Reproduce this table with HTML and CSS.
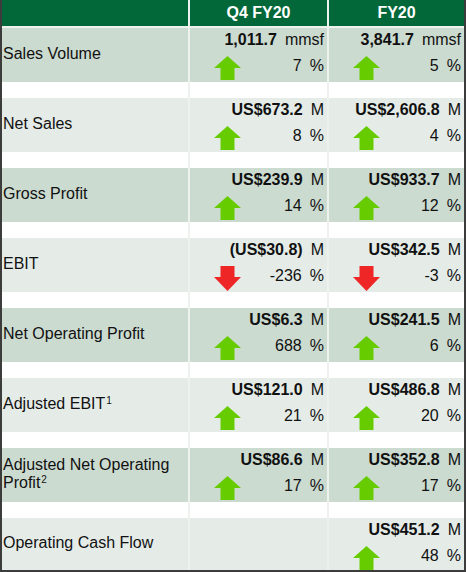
FILE: index.html
```html
<!DOCTYPE html>
<html>
<head>
<meta charset="utf-8">
<link rel="stylesheet" href="styles.css">
</head>
<body>
<svg class="defs" width="0" height="0" aria-hidden="true">
  <symbol id="up" viewBox="0 0 27 24"><polygon points="13.5,0 27,12 20.5,12 20.5,24 6.5,24 6.5,12 0,12" fill="#66cc00"/></symbol>
  <symbol id="down" viewBox="0 0 27 25"><polygon points="6.5,0 20.5,0 20.5,11 27,11 13.5,25 0,11 6.5,11" fill="#ee2626"/></symbol>
</svg>
<div class="table">
  <div class="row head">
    <div></div>
    <div class="hcell">Q4 FY20</div>
    <div class="hcell">FY20</div>
  </div>

  <div class="row dark">
    <div class="label"><span>Sales Volume</span></div>
    <div class="val"><div class="l1"><b>1,011.7</b><span class="u">mmsf</span></div><div class="l2"><svg class="arrow"><use href="#up"/></svg><span>7<span class="u">%</span></span></div></div>
    <div class="val"><div class="l1"><b>3,841.7</b><span class="u">mmsf</span></div><div class="l2"><svg class="arrow"><use href="#up"/></svg><span>5<span class="u">%</span></span></div></div>
  </div>
  <div class="row spacer"><div></div><div></div><div></div></div>

  <div class="row light">
    <div class="label"><span>Net Sales</span></div>
    <div class="val"><div class="l1"><b>US$673.2</b><span class="u">M</span></div><div class="l2"><svg class="arrow"><use href="#up"/></svg><span>8<span class="u">%</span></span></div></div>
    <div class="val"><div class="l1"><b>US$2,606.8</b><span class="u">M</span></div><div class="l2"><svg class="arrow"><use href="#up"/></svg><span>4<span class="u">%</span></span></div></div>
  </div>
  <div class="row spacer"><div></div><div></div><div></div></div>

  <div class="row dark">
    <div class="label"><span>Gross Profit</span></div>
    <div class="val"><div class="l1"><b>US$239.9</b><span class="u">M</span></div><div class="l2"><svg class="arrow"><use href="#up"/></svg><span>14<span class="u">%</span></span></div></div>
    <div class="val"><div class="l1"><b>US$933.7</b><span class="u">M</span></div><div class="l2"><svg class="arrow"><use href="#up"/></svg><span>12<span class="u">%</span></span></div></div>
  </div>
  <div class="row spacer"><div></div><div></div><div></div></div>

  <div class="row light">
    <div class="label"><span>EBIT</span></div>
    <div class="val"><div class="l1"><b>(US$30.8)</b><span class="u">M</span></div><div class="l2"><svg class="arrow dn"><use href="#down"/></svg><span>-236<span class="u">%</span></span></div></div>
    <div class="val"><div class="l1"><b>US$342.5</b><span class="u">M</span></div><div class="l2"><svg class="arrow dn"><use href="#down"/></svg><span>-3<span class="u">%</span></span></div></div>
  </div>
  <div class="row spacer"><div></div><div></div><div></div></div>

  <div class="row dark">
    <div class="label"><span>Net Operating Profit</span></div>
    <div class="val"><div class="l1"><b>US$6.3</b><span class="u">M</span></div><div class="l2"><svg class="arrow"><use href="#up"/></svg><span>688<span class="u">%</span></span></div></div>
    <div class="val"><div class="l1"><b>US$241.5</b><span class="u">M</span></div><div class="l2"><svg class="arrow"><use href="#up"/></svg><span>6<span class="u">%</span></span></div></div>
  </div>
  <div class="row spacer"><div></div><div></div><div></div></div>

  <div class="row light">
    <div class="label"><span>Adjusted EBIT<sup>1</sup></span></div>
    <div class="val"><div class="l1"><b>US$121.0</b><span class="u">M</span></div><div class="l2"><svg class="arrow"><use href="#up"/></svg><span>21<span class="u">%</span></span></div></div>
    <div class="val"><div class="l1"><b>US$486.8</b><span class="u">M</span></div><div class="l2"><svg class="arrow"><use href="#up"/></svg><span>20<span class="u">%</span></span></div></div>
  </div>
  <div class="row spacer"><div></div><div></div><div></div></div>

  <div class="row dark">
    <div class="label"><span>Adjusted Net Operating Profit<sup>2</sup></span></div>
    <div class="val"><div class="l1"><b>US$86.6</b><span class="u">M</span></div><div class="l2"><svg class="arrow"><use href="#up"/></svg><span>17<span class="u">%</span></span></div></div>
    <div class="val"><div class="l1"><b>US$352.8</b><span class="u">M</span></div><div class="l2"><svg class="arrow"><use href="#up"/></svg><span>17<span class="u">%</span></span></div></div>
  </div>
  <div class="row spacer"><div></div><div></div><div></div></div>

  <div class="row light last">
    <div class="label"><span>Operating Cash Flow</span></div>
    <div class="val"></div>
    <div class="val"><div class="l1"><b>US$451.2</b><span class="u">M</span></div><div class="l2"><svg class="arrow"><use href="#up"/></svg><span>48<span class="u">%</span></span></div></div>
  </div>
</div>
</body>
</html>
```
FILE: styles.css
```css
html, body {
  margin: 0;
  padding: 0;
  background: #ffffff;
}
.defs {
  position: absolute;
  width: 0;
  height: 0;
}
.table {
  width: 466px;
  height: 572px;
  box-sizing: border-box;
  border-left: 2px solid #3c3c3c;
  border-right: 2px solid #3c3c3c;
  border-bottom: 2px solid #3c3c3c;
  background: #eef2ef;
  display: flex;
  flex-direction: column;
  font-family: "Liberation Sans", Arial, sans-serif;
  font-size: 16px;
  color: #111111;
}
.row {
  display: grid;
  grid-template-columns: 186px 137px 135px;
  column-gap: 2px;
  height: 54px;
}
.row.head {
  height: 26px;
  margin-bottom: 2px;
}
.row.head > div {
  background: #02683a;
}
.hcell {
  color: #ffffff;
  font-weight: bold;
  text-align: center;
  line-height: 26px;
}
.row.last {
  height: 52px;
}
.row.spacer {
  height: 16px;
}
.row.spacer > div {
  background: #ffffff;
}
.row.dark > div {
  background: #ccdbd0;
}
.row.light > div {
  background: #e5ece8;
}
.label {
  display: flex;
  align-items: center;
  padding: 0 4px 3px 1px;
  line-height: 17.5px;
}
.label sup {
  font-size: 10px;
  line-height: 0;
  vertical-align: 5px;
  margin-left: 1px;
}
.val {
  display: flex;
  flex-direction: column;
  padding-right: 3px;
  line-height: 20px;
}
.l1 {
  padding-top: 2px;
  height: 20px;
  text-align: right;
}
.u {
  margin-left: 8px;
}
.l2 {
  margin-top: 6px;
  height: 24px;
  display: flex;
  justify-content: space-between;
  align-items: flex-start;
  padding-left: 24px;
}
.arrow {
  width: 27px;
  height: 24px;
  display: block;
}
.arrow.dn {
  height: 25px;
}
```
